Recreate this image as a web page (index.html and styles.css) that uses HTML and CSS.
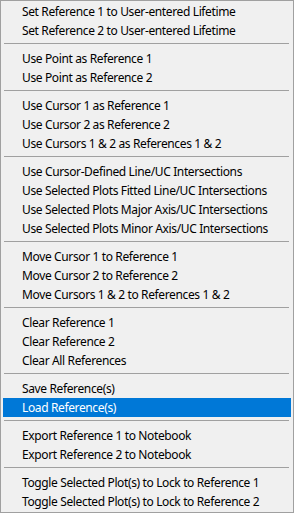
FILE: index.html
```html
<!DOCTYPE html>
<html lang="en">

<head>
    <meta charset="UTF-8">
    <title>Reference Menu</title>
    <link rel="stylesheet" href="styles.css">
</head>

<body>
    <div class="menu">
        <div class="item">Set Reference 1 to User-entered Lifetime</div>
        <div class="item">Set Reference 2 to User-entered Lifetime</div>
        <div class="sep"></div>
        <div class="item">Use Point as Reference 1</div>
        <div class="item">Use Point as Reference 2</div>
        <div class="sep"></div>
        <div class="item">Use Cursor 1 as Reference 1</div>
        <div class="item">Use Cursor 2 as Reference 2</div>
        <div class="item">Use Cursors 1 &amp; 2 as References 1 &amp; 2</div>
        <div class="sep"></div>
        <div class="item">Use Cursor-Defined Line/UC Intersections</div>
        <div class="item">Use Selected Plots Fitted Line/UC Intersections</div>
        <div class="item">Use Selected Plots Major Axis/UC Intersections</div>
        <div class="item">Use Selected Plots Minor Axis/UC Intersections</div>
        <div class="sep"></div>
        <div class="item">Move Cursor 1 to Reference 1</div>
        <div class="item">Move Cursor 2 to Reference 2</div>
        <div class="item">Move Cursors 1 &amp; 2 to References 1 &amp; 2</div>
        <div class="sep"></div>
        <div class="item">Clear Reference 1</div>
        <div class="item">Clear Reference 2</div>
        <div class="item">Clear All References</div>
        <div class="sep"></div>
        <div class="item">Save Reference(s)</div>
        <div class="item active">Load Reference(s)</div>
        <div class="sep"></div>
        <div class="item">Export Reference 1 to Notebook</div>
        <div class="item">Export Reference 2 to Notebook</div>
        <div class="sep"></div>
        <div class="item">Toggle Selected Plot(s) to Lock to Reference 1</div>
        <div class="item">Toggle Selected Plot(s) to Lock to Reference 2</div>
    </div>
</body>

</html>
```

FILE: styles.css
```css
/* Context menu */
body {
    margin: 0;
    padding: 0;
    background: #f0f0f0;
    font-family: 'Noto Sans', 'Segoe UI', sans-serif;
    font-size: 12px;
}

.menu {
    width: 294px;
    height: 513px;
    box-sizing: border-box;
    border: 1px solid #a0a0a0;
    padding: 1px 2px;
    background: #f0f0f0;
}

.item {
    height: 19px;
    line-height: 19px;
    padding-left: 19px;
    color: #000;
    letter-spacing: -0.37px;
    white-space: nowrap;
}

.item.active {
    background: #0078d7;
    color: #fff;
}

.sep {
    height: 1px;
    margin: 3px 2px 5px 1px;
    background: #a0a0a0;
}
```
